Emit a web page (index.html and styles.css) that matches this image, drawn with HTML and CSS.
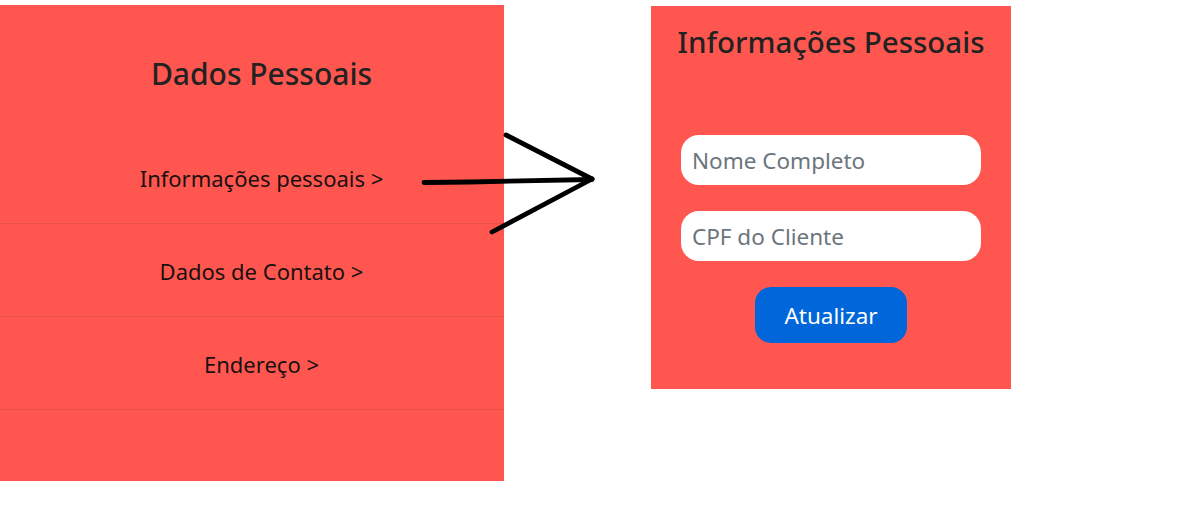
FILE: index.html
```html
<!DOCTYPE html>
<html lang="pt-BR">
<head>
<meta charset="utf-8">
<title>Dados Pessoais</title>
<link rel="stylesheet" href="styles.css">
</head>
<body>
<div class="page">
  <section class="menu">
    <h2 class="menu-title">Dados Pessoais</h2>
    <ul class="menu-list">
      <li class="menu-item">Informações pessoais &gt;</li>
      <li class="menu-item">Dados de Contato &gt;</li>
      <li class="menu-item">Endereço &gt;</li>
    </ul>
  </section>
  <section class="form-card">
    <h2 class="form-title">Informações Pessoais</h2>
    <form class="form">
      <input class="field" type="text" placeholder="Nome Completo">
      <input class="field" type="text" placeholder="CPF do Cliente">
      <button class="btn" type="button">Atualizar</button>
    </form>
  </section>
  <svg class="arrow" width="1185" height="511" viewBox="0 0 1185 511">
    <g stroke="#000" stroke-width="4.8" stroke-linecap="round" fill="none">
      <path d="M424 182.5 L470 182 L592 179.5"/>
      <path d="M506 135 L592 179"/>
      <path d="M492 232 L592 179"/>
    </g>
  </svg>
</div>
</body>
</html>
```

FILE: styles.css
```css
* { box-sizing: border-box; }
html, body { margin: 0; padding: 0; background: #fff; }
body { font-family: "Noto Sans", "Open Sans", sans-serif; color: #212529; }
.page { position: relative; display: flex; align-items: flex-start; gap: 147px; width: 1185px; height: 511px; }
.menu { margin-top: 5px; width: 504px; height: 476px; background: #ff574f; }
.menu-title { margin: 0; height: 126px; padding-top: 49px; padding-left: 19px; text-align: center; font-size: 30px; font-weight: 500; line-height: 40px; color: #222; }
.menu-list { list-style: none; margin: 0; padding: 0; }
.menu-item { height: 93px; display: flex; align-items: center; justify-content: center; padding-left: 19px; padding-top: 2px; font-size: 22px; color: #1a1010; border-bottom: 1px solid rgba(0,0,0,0.08); }
.form-card { margin-top: 6px; width: 360px; height: 383px; background: #ff574f; display: flex; flex-direction: column; align-items: center; }
.form-title { margin: 0; padding-top: 16px; font-size: 29.5px; font-weight: 500; line-height: 40px; color: #222; }
.form { margin-top: 73px; display: flex; flex-direction: column; align-items: center; gap: 26px; }
.field { width: 300px; height: 50px; border: none; border-radius: 18px; padding: 0 11px; font-family: inherit; font-size: 22.5px; color: #495057; background: #fff; outline: none; }
.field::placeholder { color: #6c757d; }
.btn { width: 152px; height: 56px; border: none; border-radius: 16px; background: #0066d9; color: #fff; font-family: inherit; font-size: 22.5px; }
.arrow { position: absolute; left: 0; top: 0; pointer-events: none; }
```
